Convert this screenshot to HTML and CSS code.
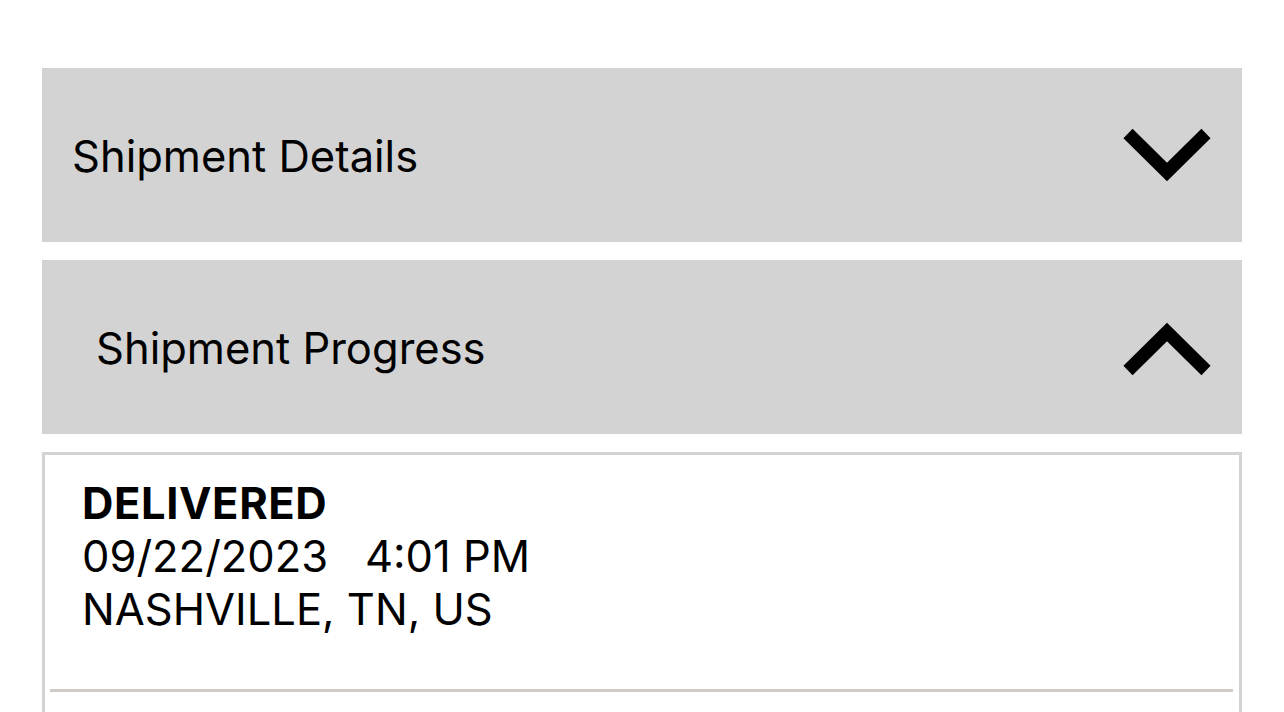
FILE: index.html
```html
<!DOCTYPE html>
<html lang="en">
<head>
    <meta charset="UTF-8">
    <meta name="viewport" content="width=device-width, initial-scale=1.0">
    <title>Shipment Tracking</title>
    <link rel="stylesheet" href="styles.css">
</head>
<body>

    <div class="tracking">
        <!-- Collapsed section -->
        <div class="section-header">
            <span class="section-title">Shipment Details</span>
            <svg class="chevron" viewBox="0 0 90 56" width="90" height="56">
                <polyline points="7,5.5 46,44 85,5.5" />
            </svg>
        </div>

        <!-- Expanded section -->
        <div class="section-header">
            <span class="section-title indent">Shipment Progress</span>
            <svg class="chevron" viewBox="0 0 90 56" width="90" height="56">
                <polyline points="7,50.5 46,12 85,50.5" />
            </svg>
        </div>

        <div class="progress-card">
            <div class="event">
                <div class="event-status">DELIVERED</div>
                <div>09/22/2023&nbsp;&nbsp;&nbsp;4:01 PM</div>
                <div>NASHVILLE, TN, US</div>
            </div>
            <div class="divider"></div>
            <div class="event"></div>
        </div>
    </div>

</body>
</html>
```

FILE: styles.css
```css
body {
    margin: 0;
    background-color: #fff;
    color: #000;
    font-family: Inter, "Noto Sans", sans-serif;
}
.tracking {
    padding: 68px 42px 0;
    display: flex;
    flex-direction: column;
    gap: 18px;
}
.section-header {
    box-sizing: border-box;
    height: 174px;
    background-color: #d3d3d3;
    display: flex;
    align-items: center;
    justify-content: space-between;
    padding: 1px 31px 0 30px;
}
.section-title {
    font-size: 43.5px;
}
.section-title.indent {
    padding-left: 24px;
}
.chevron polyline {
    fill: none;
    stroke: #000;
    stroke-width: 13;
    stroke-linejoin: miter;
}
.progress-card {
    border: 3px solid #d3d3d3;
    border-bottom: none;
    padding: 0 6px 0 5px;
}
.event {
    padding: 22px 0 53px 32px;
    font-size: 43.5px;
    line-height: 53px;
}
.event-status {
    font-weight: 700;
    letter-spacing: 0.6px;
}
.divider {
    height: 3px;
    background-color: #d0cbc6;
}
```
